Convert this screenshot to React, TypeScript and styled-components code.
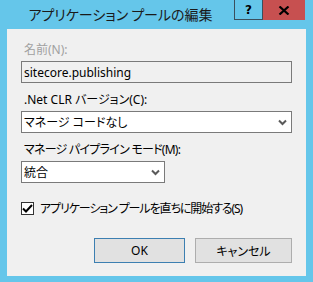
import React from "react";
import styled, { createGlobalStyle } from "styled-components";

const Global = createGlobalStyle`
  html, body { margin: 0; padding: 0; background: #65c6ea; }
  body {
    font-family: "Noto Sans", "Noto Sans CJK JP", sans-serif;
    font-size: 12px;
    color: #000;
    font-feature-settings: "palt";
  }
  * { box-sizing: border-box; }
`;

const Frame = styled.div`
  width: 313px;
  height: 282px;
  background: #65c6ea;
  display: flex;
  flex-direction: column;
  padding: 0 7px 6px 7px;
`;

const TitleBar = styled.div`
  height: 29px;
  display: flex;
  position: relative;
  flex-shrink: 0;
`;

const Title = styled.div`
  position: absolute;
  left: 0;
  width: 227px;
  top: 5px;
  text-align: center;
  font-family: "Noto Sans CJK JP", sans-serif;
  font-feature-settings: "palt";
  font-size: 14px;
  line-height: 18px;
  color: #1a1a1a;
`;

const CaptionButtons = styled.div`
  position: absolute;
  right: 1px;
  top: 0;
  display: flex;
`;

const CapBtn = styled.div<{ $close?: boolean }>`
  height: 20px;
  width: ${(p) => (p.$close ? "42px" : "29px")};
  background: ${(p) => (p.$close ? "#c75050" : "#65c6ea")};
  border: 1px solid #3b4f5c;
  border-top: none;
  ${(p) => (p.$close ? "border: none;" : "")}
  display: flex;
  align-items: center;
  justify-content: center;
  font-family: "DejaVu Sans", sans-serif;
  font-weight: bold;
  font-size: 12px;
  color: #000;
`;

const Client = styled.div`
  flex: 1;
  background: #f0f0f0;
  padding: 13px 14px 0 14px;
  display: flex;
  flex-direction: column;
`;

const Field = styled.div<{ $width?: number }>`
  display: flex;
  flex-direction: column;
  gap: 3px;
  margin-bottom: 9px;
  width: ${(p) => (p.$width ? `${p.$width}px` : "271px")};
`;

const Label = styled.div<{ $disabled?: boolean; $spacing?: number }>`
  line-height: 16px;
  padding-left: 3px;
  color: ${(p) => (p.$disabled ? "#a0a0a0" : "#000")};
  letter-spacing: ${(p) => p.$spacing ?? 0}px;
  white-space: nowrap;
`;

const TextBox = styled.div`
  height: 22px;
  border: 1px solid #7a7a7a;
  background: #f0f0f0;
  padding: 0 0 0 2px;
  display: flex;
  align-items: center;
`;

const Select = styled.div`
  height: 22px;
  border: 1px solid #7a7a7a;
  background: #fff;
  padding: 0 4px 0 2px;
  display: flex;
  align-items: center;
  justify-content: space-between;
`;

const Chevron = () => (
  <svg width="9" height="7" viewBox="0 0 9 7">
    <path d="M1 1.5 L4.5 5 L8 1.5" stroke="#5a5a5a" strokeWidth="2" fill="none" />
  </svg>
);

const CheckRow = styled.div`
  display: flex;
  align-items: center;
  gap: 6px;
  margin-top: 8px;
  height: 16px;
`;

const CheckText = styled.span`
  letter-spacing: -1.1px;
  white-space: nowrap;
`;

const CheckBox = styled.div`
  width: 13px;
  height: 13px;
  border: 1px solid #333;
  background: #fff;
  display: flex;
  align-items: center;
  justify-content: center;
`;

const ButtonRow = styled.div`
  display: flex;
  justify-content: flex-end;
  gap: 10px;
  margin-top: 22px;
`;

const Button = styled.div<{ $default?: boolean; $w: number }>`
  width: ${(p) => p.$w}px;
  height: 25px;
  background: #e1e1e1;
  border: 1px solid ${(p) => (p.$default ? "#3c7fb1" : "#adadad")};
  display: flex;
  align-items: center;
  justify-content: center;
`;

export default function App() {
  return (
    <>
      <Global />
      <Frame>
        <TitleBar>
          <Title>アプリケーション プールの編集</Title>
          <CaptionButtons>
            <CapBtn>?</CapBtn>
            <CapBtn $close>
              <svg width="12" height="9" viewBox="0 0 12 9">
                <path d="M1.5 0.5 L10.5 8.5 M10.5 0.5 L1.5 8.5" stroke="#000" strokeWidth="2.2" />
              </svg>
            </CapBtn>
          </CaptionButtons>
        </TitleBar>
        <Client>
          <Field>
            <Label $disabled>名前(N):</Label>
            <TextBox>sitecore.publishing</TextBox>
          </Field>
          <Field>
            <Label>.Net CLR バージョン(C):</Label>
            <Select>
              <span>マネージ コードなし</span>
              <Chevron />
            </Select>
          </Field>
          <Field $width={144}>
            <Label $spacing={-0.75}>マネージ パイプライン モード(M):</Label>
            <Select>
              <span>統合</span>
              <Chevron />
            </Select>
          </Field>
          <CheckRow>
            <CheckBox>
              <svg width="11" height="9" viewBox="0 0 11 9">
                <path d="M1 4.5 L4 7.5 L10 1" stroke="#000" strokeWidth="2" fill="none" />
              </svg>
            </CheckBox>
            <CheckText>アプリケーション プールを直ちに開始する(S)</CheckText>
          </CheckRow>
          <ButtonRow>
            <Button $default $w={91}>OK</Button>
            <Button $w={97}>キャンセル</Button>
          </ButtonRow>
        </Client>
      </Frame>
    </>
  );
}
